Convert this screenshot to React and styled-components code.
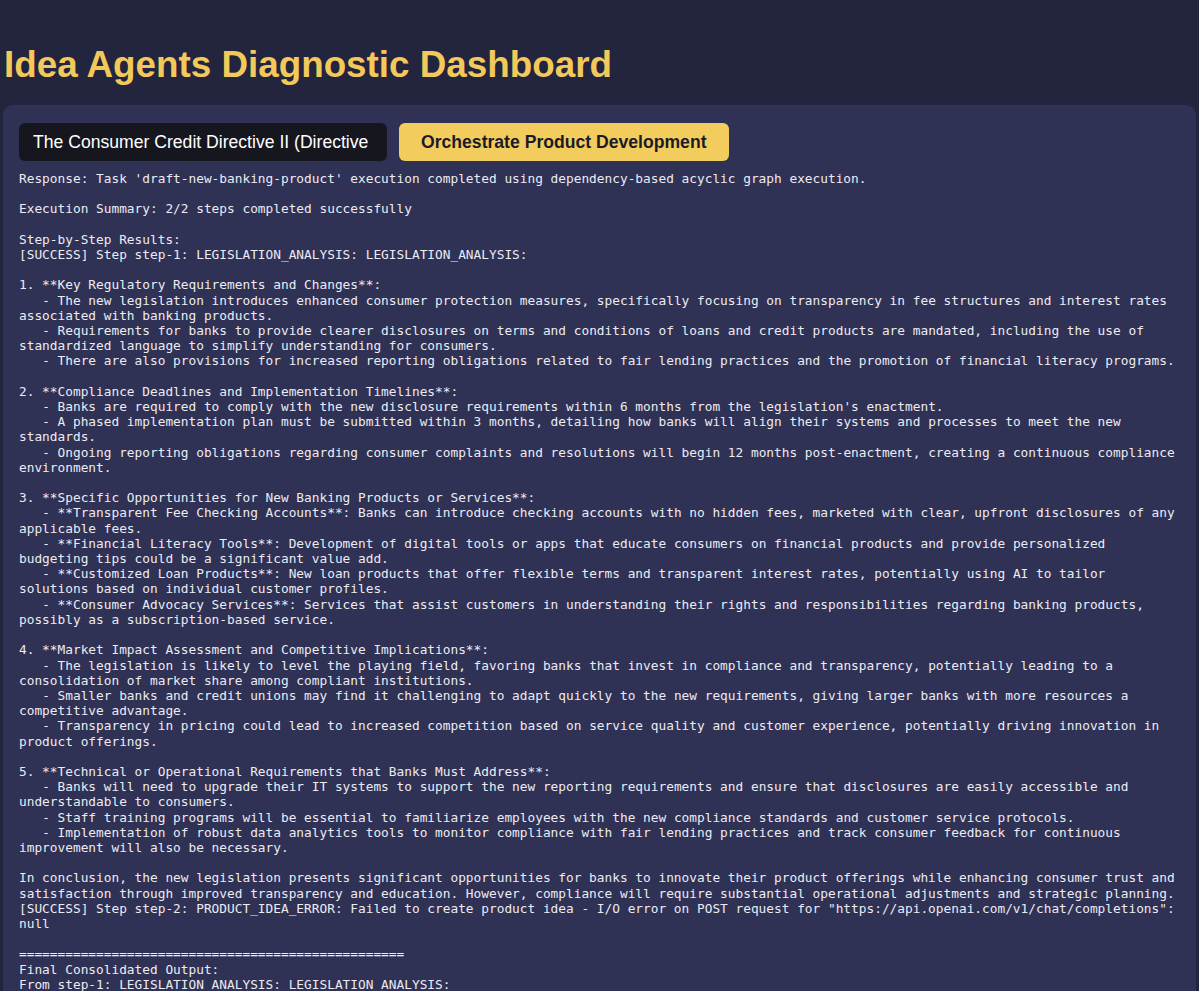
import React, { useState } from 'react';
import styled, { createGlobalStyle } from 'styled-components';

const GlobalStyle = createGlobalStyle`
  html, body {
    margin: 0;
    padding: 0;
    background-color: #23243e;
  }

  body {
    font-family: 'Liberation Sans', Arial, sans-serif;
  }
`;

const RESULT = `Response: Task 'draft-new-banking-product' execution completed using dependency-based acyclic graph execution.

Execution Summary: 2/2 steps completed successfully

Step-by-Step Results:
[SUCCESS] Step step-1: LEGISLATION_ANALYSIS: LEGISLATION_ANALYSIS:

1. **Key Regulatory Requirements and Changes**:
   - The new legislation introduces enhanced consumer protection measures, specifically focusing on transparency in fee structures and interest rates associated with banking products.
   - Requirements for banks to provide clearer disclosures on terms and conditions of loans and credit products are mandated, including the use of standardized language to simplify understanding for consumers.
   - There are also provisions for increased reporting obligations related to fair lending practices and the promotion of financial literacy programs.

2. **Compliance Deadlines and Implementation Timelines**:
   - Banks are required to comply with the new disclosure requirements within 6 months from the legislation's enactment.
   - A phased implementation plan must be submitted within 3 months, detailing how banks will align their systems and processes to meet the new standards.
   - Ongoing reporting obligations regarding consumer complaints and resolutions will begin 12 months post-enactment, creating a continuous compliance environment.

3. **Specific Opportunities for New Banking Products or Services**:
   - **Transparent Fee Checking Accounts**: Banks can introduce checking accounts with no hidden fees, marketed with clear, upfront disclosures of any applicable fees.
   - **Financial Literacy Tools**: Development of digital tools or apps that educate consumers on financial products and provide personalized budgeting tips could be a significant value add.
   - **Customized Loan Products**: New loan products that offer flexible terms and transparent interest rates, potentially using AI to tailor solutions based on individual customer profiles.
   - **Consumer Advocacy Services**: Services that assist customers in understanding their rights and responsibilities regarding banking products, possibly as a subscription-based service.

4. **Market Impact Assessment and Competitive Implications**:
   - The legislation is likely to level the playing field, favoring banks that invest in compliance and transparency, potentially leading to a consolidation of market share among compliant institutions.
   - Smaller banks and credit unions may find it challenging to adapt quickly to the new requirements, giving larger banks with more resources a competitive advantage.
   - Transparency in pricing could lead to increased competition based on service quality and customer experience, potentially driving innovation in product offerings.

5. **Technical or Operational Requirements that Banks Must Address**:
   - Banks will need to upgrade their IT systems to support the new reporting requirements and ensure that disclosures are easily accessible and understandable to consumers.
   - Staff training programs will be essential to familiarize employees with the new compliance standards and customer service protocols.
   - Implementation of robust data analytics tools to monitor compliance with fair lending practices and track consumer feedback for continuous improvement will also be necessary.

In conclusion, the new legislation presents significant opportunities for banks to innovate their product offerings while enhancing consumer trust and satisfaction through improved transparency and education. However, compliance will require substantial operational adjustments and strategic planning.
[SUCCESS] Step step-2: PRODUCT_IDEA_ERROR: Failed to create product idea - I/O error on POST request for "https://api.openai.com/v1/chat/completions": null

==================================================
Final Consolidated Output:
From step-1: LEGISLATION_ANALYSIS: LEGISLATION_ANALYSIS:
`;

export default function App() {
  const [legislation, setLegislation] = useState(
    'The Consumer Credit Directive II (Directive (EU) 2023/2225)'
  );

  const handleChange = (e) => {
    setLegislation(e.target.value);
  };

  return (
    <Page>
      <GlobalStyle />
      <Header>
        <Title>Idea Agents Diagnostic Dashboard</Title>
      </Header>
      <Panel>
        <Controls>
          <LegislationInput
            type="text"
            value={legislation}
            onChange={handleChange}
          />
          <RunBtn>Orchestrate Product Development</RunBtn>
        </Controls>
        <Output>{RESULT}</Output>
      </Panel>
    </Page>
  );
}

const Page = styled.main`
  display: flex;
  flex-direction: column;
  min-height: 991px;
  padding: 0 3px;
  box-sizing: border-box;
  overflow: hidden;
`;

const Header = styled.header`
  padding: 44px 1px 19px;
`;

const Title = styled.h1`
  margin: 0;
  color: #f2c95a;
  font-family: 'Liberation Sans', Arial, sans-serif;
  font-size: 36.8px;
  font-weight: 700;
  line-height: normal;
`;

const Panel = styled.section`
  flex: 1;
  background-color: #2f3155;
  border-radius: 10px 10px 0 0;
  padding: 18px 16px;
`;

const Controls = styled.div`
  display: flex;
  align-items: center;
  gap: 12px;
`;

const LegislationInput = styled.input`
  width: 368px;
  height: 38px;
  box-sizing: border-box;
  padding: 0 14px;
  border: none;
  border-radius: 6px;
  background-color: #16161f;
  color: #ffffff;
  font-family: 'Liberation Sans', Arial, sans-serif;
  font-size: 17.6px;
  outline: none;
`;

const RunBtn = styled.button`
  height: 38px;
  padding: 0 22px;
  border: none;
  border-radius: 6px;
  background-color: #f2cc5c;
  color: #1b1b28;
  font-family: 'Liberation Sans', Arial, sans-serif;
  font-size: 17.6px;
  font-weight: 700;

  &:hover {
    cursor: pointer;
  }
`;

const Output = styled.pre`
  margin: 10px 0 0;
  color: #ececf2;
  font-family: 'DejaVu Sans Mono', 'Liberation Mono', monospace;
  font-size: 12.8px;
  line-height: 15.2px;
  white-space: pre-wrap;
  word-break: normal;
`;
